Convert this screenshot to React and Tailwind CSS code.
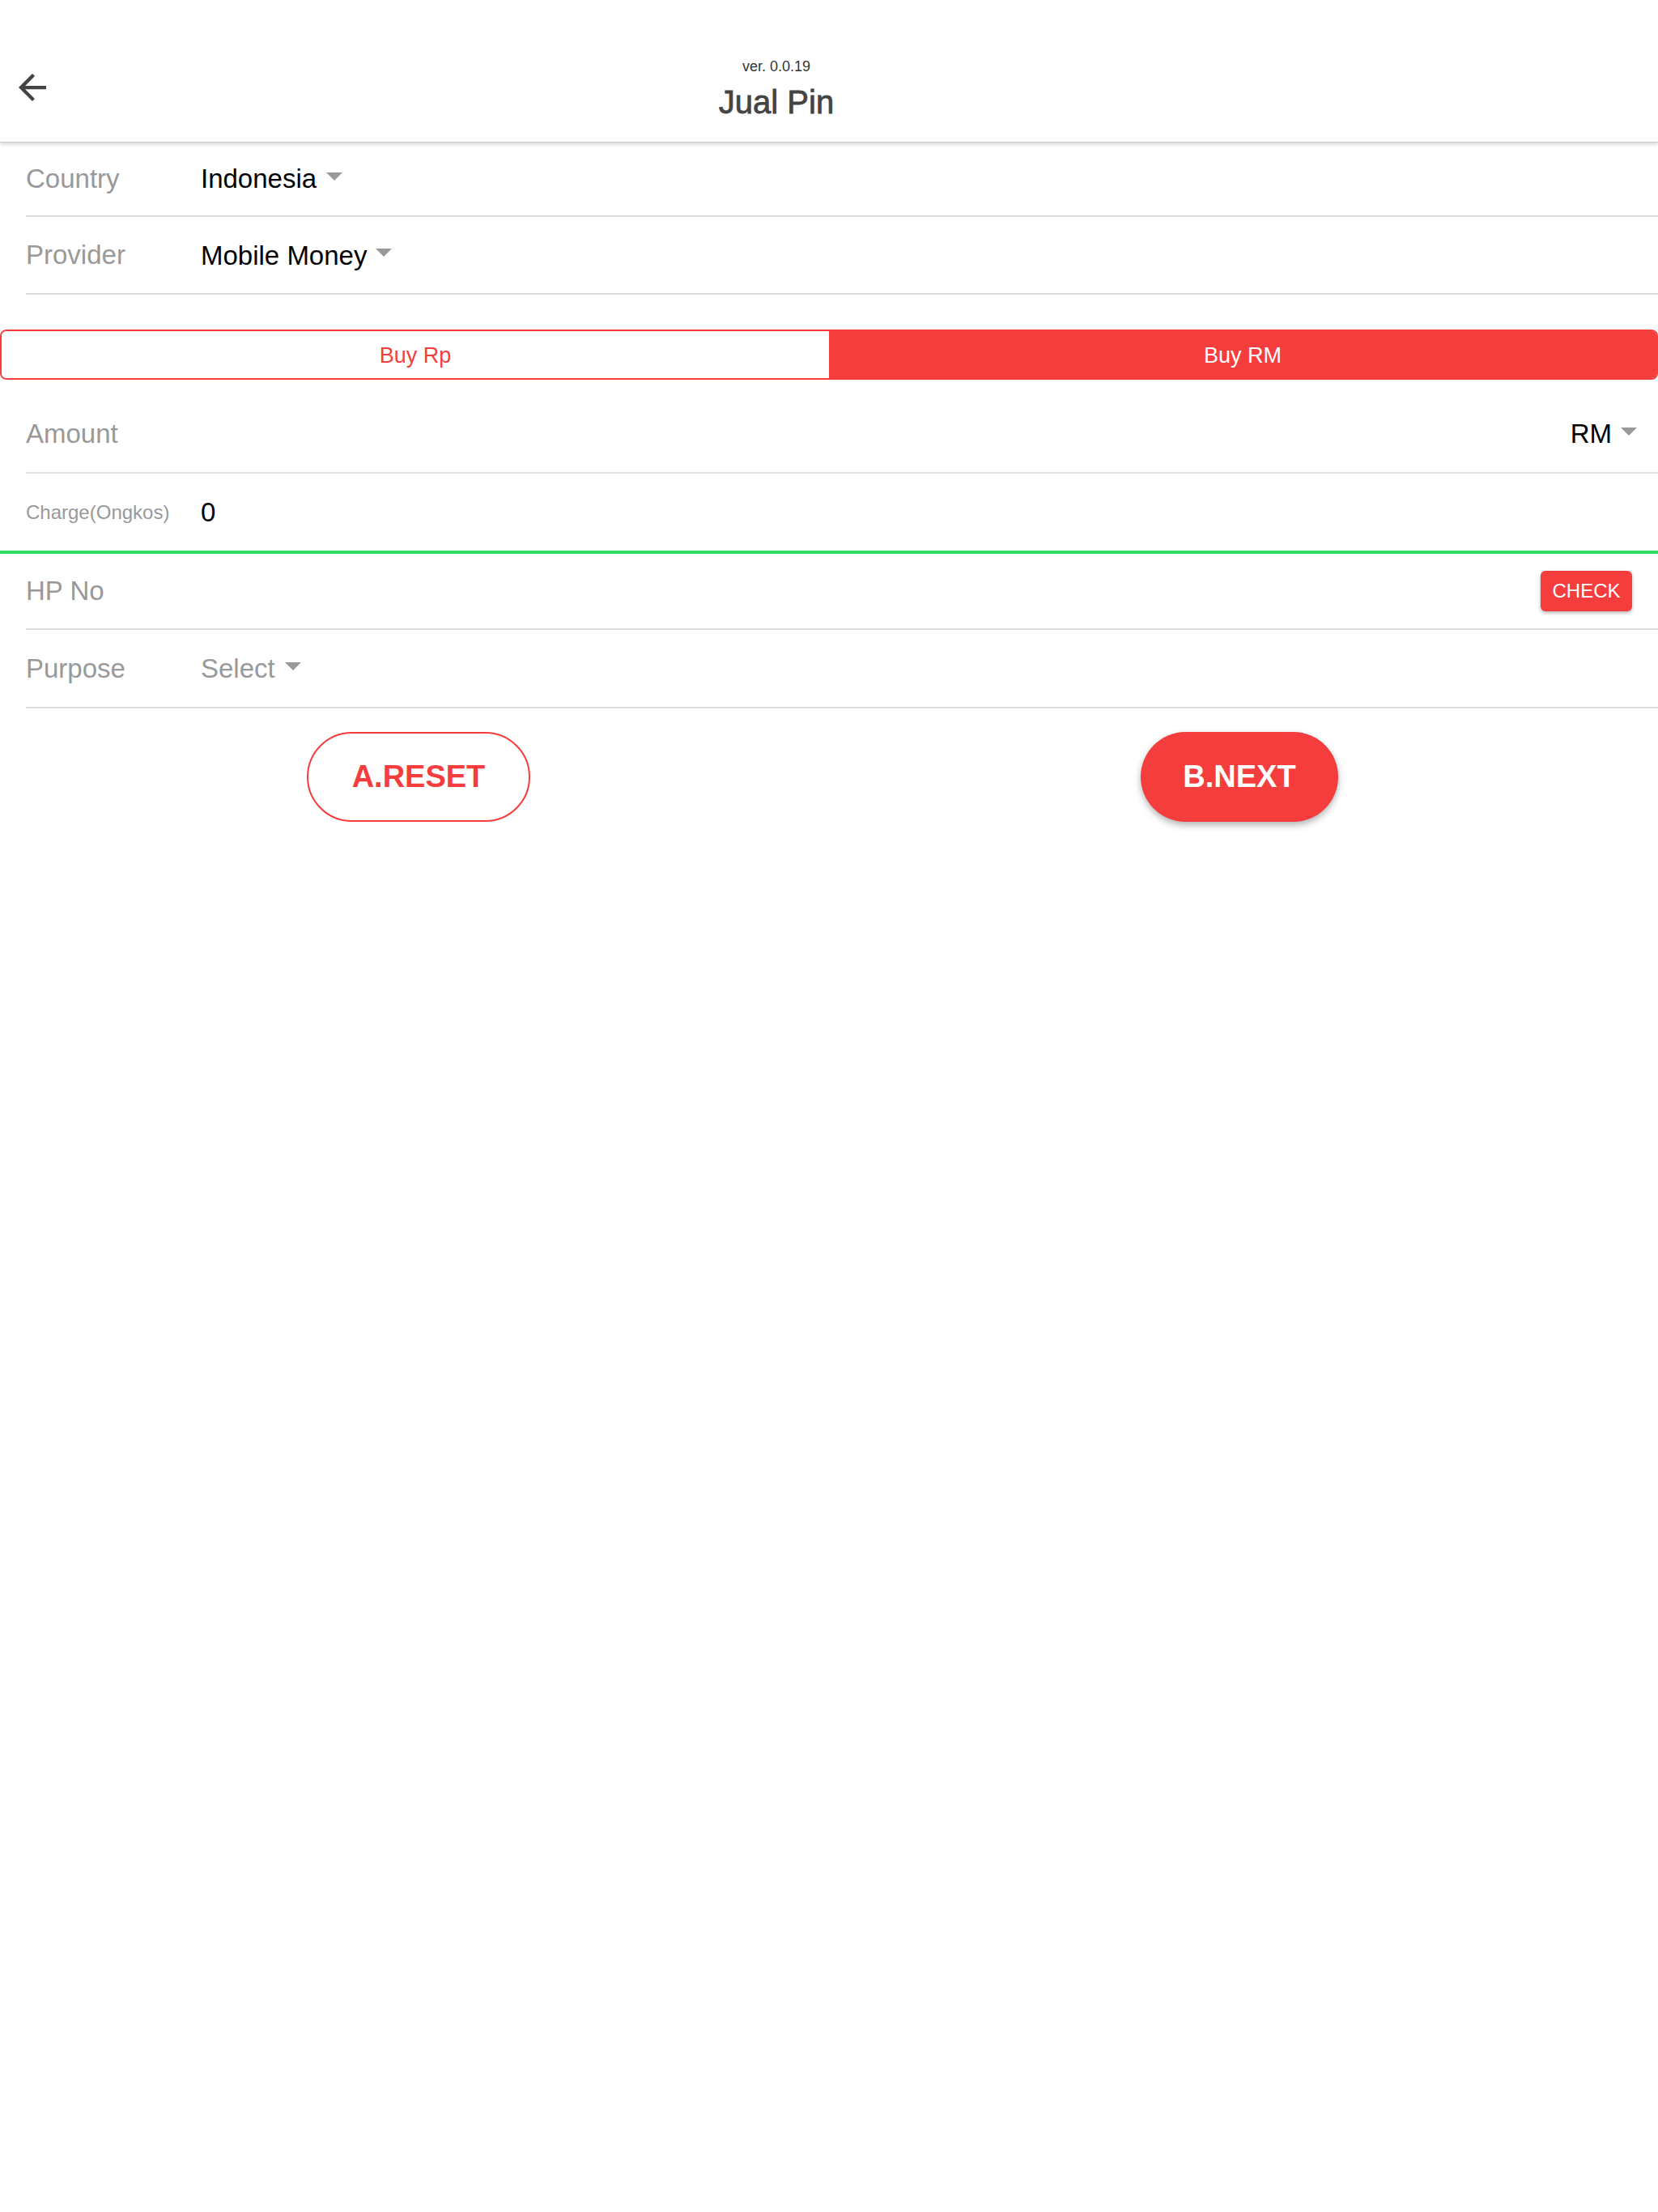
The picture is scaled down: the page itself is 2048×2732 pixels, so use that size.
import React from "react";

function Caret() {
  return (
    <svg width="20" height="10" viewBox="0 0 20 10" className="mb-[6px] shrink-0">
      <polygon points="0,0 20,0 10,10" fill="#999999" />
    </svg>
  );
}

function Row({ h, label, labelClass = "text-[33px]", children, right, rightPad = "pr-[32px]" }) {
  return (
    <div className="pl-[32px]">
      <div className={`flex items-center border-b-2 border-[#dedede] ${h} ${rightPad}`}>
        <div className={`w-[216px] shrink-0 text-[#999999] ${labelClass}`}>{label}</div>
        <div className="flex flex-1 items-center text-[33px] text-black">{children}</div>
        {right}
      </div>
    </div>
  );
}

export default function App() {
  return (
    <div className="min-h-[2732px] w-full bg-white font-['Liberation_Sans',Arial,sans-serif]">
      {/* Header */}
      <div className="relative z-10 flex h-[176px] items-center border-b border-[#c9c9c9] bg-white pt-[40px] shadow-[0_2px_5px_rgba(0,0,0,0.18)]">
        <div className="flex w-[100px] shrink-0 items-center pl-[23px]">
          <svg width="34" height="34" viewBox="4 4 16 16" fill="#444444">
            <path d="M20 11H7.83l5.59-5.59L12 4l-8 8 8 8 1.41-1.41L7.83 13H20v-2z" />
          </svg>
        </div>
        <div className="flex flex-1 flex-col items-center pt-[5px]">
          <div className="text-[18px] leading-[22px] text-[#333333]">ver. 0.0.19</div>
          <div className="mt-[10px] text-[40px] leading-[46px] text-[#444444] [-webkit-text-stroke:0.8px_#444444]">Jual Pin</div>
        </div>
        <div className="w-[230px] shrink-0" />
      </div>

      {/* Country */}
      <Row h="h-[92px]" label="Country">
        <span>Indonesia</span>
        <span className="ml-[12px] flex items-center"><Caret /></span>
      </Row>

      {/* Provider */}
      <Row h="h-[96px]" label="Provider">
        <span className="pt-[2px]">Mobile Money</span>
        <span className="ml-[11px] flex items-center"><Caret /></span>
      </Row>

      {/* Segment */}
      <div className="mt-[43px] flex h-[62px] overflow-hidden rounded-[8px] border-2 border-[#f53d3d]">
        <div className="flex flex-1 items-center justify-center bg-white pt-[2px] text-[27px] text-[#f53d3d]">Buy Rp</div>
        <div className="flex flex-1 items-center justify-center bg-[#f53d3d] pt-[2px] text-[27px] text-white">Buy RM</div>
      </div>

      {/* Amount */}
      <div className="mt-[20px]">
        <Row
          h="h-[96px]"
          label="Amount"
          rightPad="pr-[26px]"
          right={
            <div className="flex items-center text-[33px] text-black">
              <span>RM</span>
              <span className="ml-[11px] flex items-center"><Caret /></span>
            </div>
          }
        />
      </div>

      {/* Charge */}
      <div className="border-b-4 border-[#32db64] pl-[32px]">
        <div className="flex h-[95px] items-center">
          <div className="w-[216px] shrink-0 text-[24px] text-[#999999]">Charge(Ongkos)</div>
          <div className="text-[33px] text-black">0</div>
        </div>
      </div>

      {/* HP No */}
      <Row
        h="h-[94px]"
        label="HP No"
        right={
          <button className="flex h-[50px] w-[113px] items-center justify-center rounded-[6px] bg-[#f53d3d] text-[24px] text-white shadow-[0_2px_4px_rgba(0,0,0,0.3)]">
            CHECK
          </button>
        }
      />

      {/* Purpose */}
      <Row h="h-[97px]" label="Purpose">
        <span className="text-[#999999]">Select</span>
        <span className="ml-[12px] flex items-center"><Caret /></span>
      </Row>

      {/* Buttons */}
      <div className="mt-[29px] grid grid-cols-2 px-[10px]">
        <div className="flex justify-center">
          <button className="flex h-[111px] items-center justify-center rounded-full border-2 border-[#f53d3d] bg-white px-[54px] text-[38px] font-bold text-[#f53d3d]">
            A.RESET
          </button>
        </div>
        <div className="flex justify-center">
          <button className="flex h-[111px] items-center justify-center rounded-full bg-[#f53d3d] px-[52px] text-[38px] font-bold text-white shadow-[0_4px_8px_rgba(0,0,0,0.3)]">
            B.NEXT
          </button>
        </div>
      </div>
    </div>
  );
}
